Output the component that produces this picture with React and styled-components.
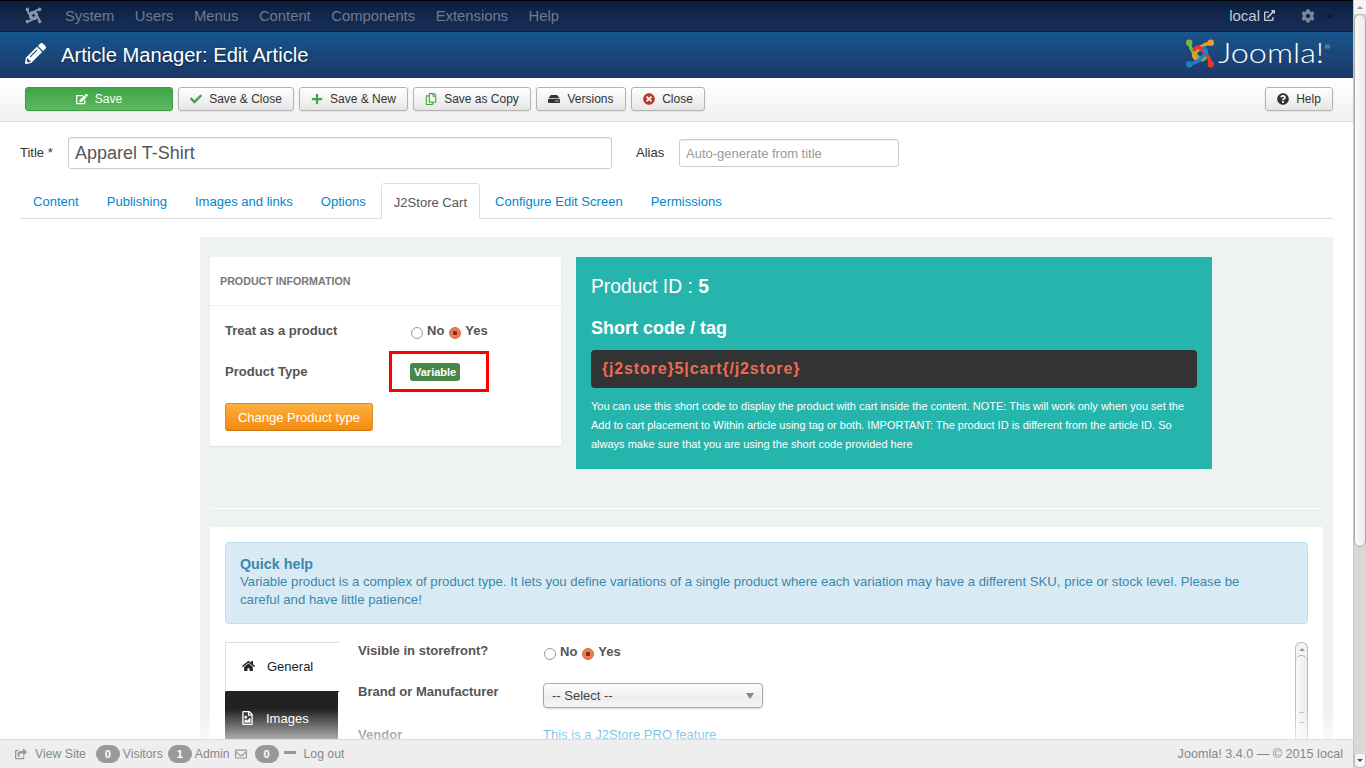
import React from "react";
import styled, { createGlobalStyle } from "styled-components";
import {
  FaPencilAlt, FaCheck, FaPlus, FaRegCopy, FaTimesCircle, FaQuestionCircle,
  FaCog, FaHome, FaRegFileImage, FaShareSquare, FaRegEnvelope, FaExternalLinkAlt, FaEdit, FaHdd,
} from "react-icons/fa";

const Global = createGlobalStyle`
  html, body { margin: 0; padding: 0; height: 100%; overflow: hidden; }
  body { font-family: "Liberation Sans", Arial, sans-serif; color: #333; background: #fff; }
  * { box-sizing: border-box; }
`;

const Shell = styled.div`display: flex; height: 768px; width: 1366px; overflow: hidden; position: relative;`;
const Main = styled.div`width: 1353px; flex: none; display: flex; flex-direction: column; height: 768px; overflow: hidden;`;

const PageScroll = styled.div`
  width: 13px; flex: none; height: 768px; background: #d9d8d4; display: flex; flex-direction: column;
  border-left: 1px solid #c8c7c3;
`;
const ScrollCap = styled.div`
  height: 14px; flex: none; background: #f6f5f3; display: flex; align-items: center; justify-content: center;
  ${(p) => p.$down && "border-radius: 0 0 5px 5px; border: 1px solid #bbb; border-top: none;"}
  &::before {
    content: ""; border-left: 3px solid transparent; border-right: 3px solid transparent;
    ${(p) => (p.$down ? "border-top: 3px solid #555;" : "border-bottom: 3px solid #999;")}
  }
`;
const PageThumb = styled.div`
  height: 533px; flex: none; border: 1px solid #aaa; border-radius: 6px;
  background: linear-gradient(to right, #fbfaf9, #ecebe9);
`;
const ScrollRest = styled.div`flex: 1;`;

const Nav = styled.div`
  height: 32px; flex: none; display: flex; align-items: center; padding: 0 0 1px 25px;
  background: linear-gradient(to bottom, #0d1f40, #172f57); border-top: 1px solid #000; border-bottom: 1px solid #0c1c38;
`;
const NavMark = styled.span`display: flex; width: 17px; height: 17px; margin-right: 23px; flex: none; svg { width: 100%; height: 100%; }`;
const NavItem = styled.span`font-size: 14.8px; color: #6e7c90; margin-right: 20.5px;`;
const NavRight = styled.div`margin-left: auto; display: flex; align-items: center; font-size: 15px;`;
const NavLocal = styled.span`display: flex; align-items: center; gap: 4px; margin-right: 26px; color: #c2cad6; svg { font-size: 11px; }`;
const NavGear = styled.span`display: flex; align-items: center; color: #7a8698; font-size: 14px; margin-right: 20px;
  &::after { content: ""; margin-left: 10px; margin-top: 2px; border-left: 4px solid transparent; border-right: 4px solid transparent; border-top: 4px solid #0b1a34; }
`;

const Header = styled.div`
  height: 46px; flex: none; display: flex; align-items: center; padding: 0 0 0 25px;
  background: linear-gradient(to bottom, #17568c, #1a3867);
`;
const HeaderIcon = styled.span`color: #fff; font-size: 21px; display: flex; margin-right: 15px; margin-top: -3px;`;
const HeaderTitle = styled.h1`margin: 0; font-size: 20.15px; font-weight: 400; color: #fff; text-shadow: 0 1px 2px rgba(0,0,0,.5);`;
const Brand = styled.div`margin-left: auto; display: flex; align-items: center; gap: 3px; margin-top: -4px;`;
const BrandMark = styled.span`display: flex; width: 30px; height: 31px; flex: none; svg { width: 100%; height: 100%; }`;
const BrandText = styled.span`display: inline-block; width: 135px; transform: scaleX(1.2); transform-origin: left center; font-family: Lato, sans-serif; font-weight: 300; font-size: 27px; color: #fff; line-height: 30px;
  sup { font-size: 6px; vertical-align: 14px; line-height: 0; }
`;

const Toolbar = styled.div`
  height: 44px; flex: none; display: flex; align-items: center; gap: 5px; padding: 0 20px 2px 25px;
  background: linear-gradient(to bottom, #fff, #f1f1f1); border-bottom: 1px solid #d8d8d8;
`;
const Btn = styled.div`
  height: 24px; display: flex; align-items: center; justify-content: center; gap: 7px;
  width: ${(p) => p.$w}px; flex: none; font-size: 12px; color: #333; border-radius: 3px;
  background: linear-gradient(to bottom, #fff, #e6e6e6); border: 1px solid #b3b3b3;
  box-shadow: 0 1px 2px rgba(0,0,0,.08);
  svg { font-size: 12px; color: ${(p) => p.$ic || "#333"}; }
`;
const SaveBtn = styled(Btn)`
  color: #fff; border-color: #3f9a46; background: linear-gradient(to bottom, #3ea745, #5cb85f);
  svg { color: #fff; }
`;
const HelpBtn = styled(Btn)`margin-left: auto;`;

const Content = styled.div`flex: 1; padding: 15px 20px 0; min-height: 0; overflow: hidden;`;
const TitleRow = styled.div`display: flex; align-items: center; height: 32px;`;
const TitleLabel = styled.label`font-size: 13px; width: 48px; flex: none; color: #333; padding-bottom: 2px;`;
const TitleInput = styled.div`
  width: 544px; height: 32px; flex: none; border: 1px solid #ccc; border-radius: 3px; padding: 0 6px;
  font-size: 18px; color: #555; display: flex; align-items: center; box-shadow: inset 0 1px 1px rgba(0,0,0,.07);
`;
const AliasLabel = styled.label`font-size: 13px; margin-left: 24px; width: 43px; flex: none; color: #333; padding-bottom: 2px;`;
const AliasInput = styled.div`
  width: 220px; height: 28px; flex: none; border: 1px solid #ccc; border-radius: 3px; padding: 0 6px;
  font-size: 13px; color: #999; display: flex; align-items: center; box-shadow: inset 0 1px 1px rgba(0,0,0,.07);
`;

const Tabs = styled.div`display: flex; margin-top: 14px; height: 36px; border-bottom: 1px solid #ddd;`;
const Tab = styled.div`
  height: ${(p) => (p.$active ? 36 : 35)}px; padding: 2px 13px 0; margin-right: 2px; display: flex; align-items: center; font-size: 13.05px;
  color: ${(p) => (p.$active ? "#555" : "#0088cc")};
  ${(p) => p.$active && "background: #fff; border: 1px solid #ddd; border-bottom-color: #fff; border-radius: 4px 4px 0 0; padding: 2px 12px 0;"}
`;

const Panel = styled.div`margin: 18px 0 0 180px; background: #eef2f3; padding: 20px 10px 0; height: 600px;`;
const TopRow = styled.div`display: flex; align-items: flex-start; gap: 15px;`;
const InfoCard = styled.div`width: 351px; height: 189px; flex: none; background: #fff; box-shadow: 0 1px 1px rgba(0,0,0,.05);`;
const InfoHead = styled.div`height: 49px; border-bottom: 1px solid #eef0f1; padding: 0 10px; display: flex; align-items: center;
  font-size: 10.7px; font-weight: 700; color: #777;`;
const InfoBody = styled.div`padding: 17px 15px 0;`;
const FieldRow = styled.div`display: flex; align-items: flex-start; height: ${(p) => p.$h}px;`;
const FieldLabel = styled.div`width: ${(p) => p.$w}px; flex: none; font-size: 13.05px; font-weight: 700; color: #555;`;
const Radios = styled.div`display: flex; align-items: center; gap: 4px; font-size: 13px; font-weight: 700; color: #555; margin-top: ${(p) => p.$mt || 0}px;`;
const RadioDot = styled.span`
  width: 12px; height: 12px; border-radius: 50%; flex: none; margin-top: 5px; margin-left: ${(p) => (p.$on ? 1 : 0)}px;
  border: 1px solid ${(p) => (p.$on ? "#d9663f" : "#999")};
  background: ${(p) => (p.$on ? "radial-gradient(circle, #7a3018 0 2px, #ec7a52 2.5px)" : "#fff")};
`;
const HighlightBox = styled.div`
  width: 100px; height: 41px; flex: none; border: 3px solid #f00; margin-left: -22px; margin-top: -13px;
  display: flex; align-items: center; padding-left: 18px;
`;
const Badge = styled.span`
  background: #47874a; color: #fff; font-size: 11px; font-weight: 700; padding: 2px 4px; border-radius: 3px; line-height: 14px;
`;
const OrangeBtn = styled.div`
  width: 148px; height: 28px; margin-top: -2px; display: flex; align-items: center; justify-content: center; font-size: 13px; color: #fff;
  background: linear-gradient(to bottom, #fbb040, #f58a0c); border: 1px solid #e58a1e; border-bottom: 1px solid #c97b10; border-radius: 3px;
`;

const Teal = styled.div`width: 636px; height: 212px; flex: none; background: #26b5ad; color: #fff; padding: 16px 15px 15px;`;
const ProductId = styled.div`font-size: 19.3px; line-height: 28px; b { font-weight: 700; }`;
const ShortCode = styled.div`font-size: 18px; font-weight: 700; line-height: 24px; margin-top: 15px;`;
const CodeBox = styled.div`height: 38px; margin-top: 10px; background: #333; border-radius: 4px; display: flex; align-items: center; padding: 0 11px;
  font-size: 16px; font-weight: 700; color: #e86d55; letter-spacing: .85px;`;
const TealText = styled.p`margin: 9px 0 0; font-size: 11px; line-height: 19px; color: #fff;`;

const Divider = styled.div`height: 1px; background: #fff; margin-top: 39px; margin-bottom: 18px;`;

const Card = styled.div`background: #fff; padding: 15px; height: 300px;`;
const Notice = styled.div`
  height: 82px; background: #d8ebf4; border: 1px solid #bcdfee; border-radius: 4px; padding: 13px 35px 13px 14px; color: #3a87ad; font-size: 13.2px; line-height: 18px;
  strong { display: block; font-size: 14.3px; line-height: 17px; }
`;
const Lower = styled.div`display: flex; margin-top: 18px; position: relative;`;
const SideTabs = styled.div`width: 114px; flex: none;`;
const SideTab = styled.div`
  height: ${(p) => (p.$active ? 50 : 60)}px; display: flex; align-items: center; gap: 12px; font-size: 13px; padding-left: 16px; padding-bottom: ${(p) => (p.$active ? 2 : 8)}px;
  ${(p) => p.$active
    ? "background: #fff; color: #222; border: 1px solid #ddd; border-right: none; border-bottom: 1px solid #222;"
    : "background: #222; color: #fff; margin-right: 1px;"}
  svg { font-size: 14px; width: 13px; }
`;
const FormCol = styled.div`flex: 1; padding: 1px 0 0 19px;`;
const FormRow = styled.div`display: flex; align-items: flex-start; height: ${(p) => p.$h}px;`;
const SelectBox = styled.div`
  width: 220px; height: 25px; margin-top: -1px; border: 1px solid #aaa; border-radius: 4px; display: flex; align-items: center; padding: 0 8px; font-size: 13px; color: #444;
  background: linear-gradient(to bottom, #fff, #eee 60%, #f6f6f6); box-shadow: 0 1px 2px rgba(0,0,0,.15);
  position: relative;
  &::after { content: ""; position: absolute; right: 8px; top: 9px; border-left: 4px solid transparent; border-right: 4px solid transparent; border-top: 6px solid #888; }
`;
const ProLink = styled.span`font-size: 13.05px; color: #0088cc;`;
const InnerScroll = styled.div`
  position: absolute; right: 0; top: 0; width: 13px; height: 110px; display: flex; flex-direction: column; border: 1px solid #bbb; border-bottom: none; border-radius: 6px 6px 0 0; background: #f4f3f1;
`;
const InnerCap = styled.div`height: 12px; flex: none; display: flex; align-items: center; justify-content: center;
  &::before { content: ""; border-left: 3px solid transparent; border-right: 3px solid transparent; border-bottom: 3px solid #999; }`;
const InnerThumb = styled.div`flex: 1; border-top: 1px solid #aaa; border-radius: 6px 6px 0 0; background: linear-gradient(to right, #fbfaf9, #ecebe9); display: flex; justify-content: center; padding-top: 56px;
  &::before { content: ""; width: 5px; height: 9px; border-top: 1px solid #bbb; border-bottom: 1px solid #bbb; }`;

const Fade = styled.div`
  position: absolute; left: 0; width: 1353px; bottom: 29px; height: 30px; pointer-events: none;
  background: linear-gradient(to bottom, rgba(255,255,255,0), rgba(255,255,255,.62));
`;
const Footer = styled.div`
  position: absolute; left: 0; bottom: 0; width: 1353px; height: 29px; background: #eee; border-top: 1px solid #ddd;
  display: flex; align-items: center; padding: 0 10px 0 15px; font-size: 12.25px; color: #888;
`;
const FootItem = styled.span`display: flex; align-items: center; margin-right: ${(p) => p.$mr || 0}px; svg { color: #999; font-size: 12px; }`;
const FootBadge = styled.span`
  background: #999; color: #fff; font-size: 11px; font-weight: 700; height: 18px; min-width: 24px; border-radius: 9px; display: inline-flex; align-items: center; justify-content: center;
  margin-right: ${(p) => p.$mr ?? 3}px;
`;
const FootDash = styled.span`width: 12px; height: 3px; background: #999; margin: -3px 8px 0 5px;`;
const FootRight = styled.span`margin-left: auto; font-size: 12.6px;`;

const JoomlaMark = ({ mono }) => {
  const colors = mono ? ["#8995a8", "#8995a8", "#8995a8", "#8995a8"] : ["#7ab83a", "#f39a2b", "#e8352e", "#1f7fc1"];
  return (
    <svg viewBox="0 0 32 32">
      {colors.map((c, i) => (
        <g key={i} transform={`rotate(${i * 90} 16 16)`} fill="none" stroke={c} strokeWidth="3.8" strokeLinecap="round" strokeLinejoin="round">
          <path d="M4.5 5 Q6 11 9 15 L16 22 Q18 23.5 20 22 L22 20" />
          <circle cx="4.5" cy="4.5" r="3.4" fill={c} stroke="none" />
        </g>
      ))}
    </svg>
  );
};

export default function App() {
  return (
    <Shell>
      <Global />
      <Main>
        <Nav>
          <NavMark><JoomlaMark mono /></NavMark>
          {["System", "Users", "Menus", "Content", "Components", "Extensions", "Help"].map((t) => (
            <NavItem key={t}>{t}</NavItem>
          ))}
          <NavRight>
            <NavLocal>local <FaExternalLinkAlt /></NavLocal>
            <NavGear><FaCog /></NavGear>
          </NavRight>
        </Nav>
        <Header>
          <HeaderIcon><FaPencilAlt /></HeaderIcon>
          <HeaderTitle>Article Manager: Edit Article</HeaderTitle>
          <Brand>
            <BrandMark><JoomlaMark /></BrandMark>
            <BrandText>Joomla!<sup>®</sup></BrandText>
          </Brand>
        </Header>
        <Toolbar>
          <SaveBtn $w={148}><FaEdit />Save</SaveBtn>
          <Btn $w={116} $ic="#46a546"><FaCheck />Save &amp; Close</Btn>
          <Btn $w={109} $ic="#46a546"><FaPlus />Save &amp; New</Btn>
          <Btn $w={118} $ic="#46a546"><FaRegCopy />Save as Copy</Btn>
          <Btn $w={90}><FaHdd />Versions</Btn>
          <Btn $w={74} $ic="#bd362f"><FaTimesCircle />Close</Btn>
          <HelpBtn $w={68}><FaQuestionCircle />Help</HelpBtn>
        </Toolbar>
        <Content>
          <TitleRow>
            <TitleLabel>Title *</TitleLabel>
            <TitleInput>Apparel T-Shirt</TitleInput>
            <AliasLabel>Alias</AliasLabel>
            <AliasInput>Auto-generate from title</AliasInput>
          </TitleRow>
          <Tabs>
            {["Content", "Publishing", "Images and links", "Options", "J2Store Cart", "Configure Edit Screen", "Permissions"].map((t) => (
              <Tab key={t} $active={t === "J2Store Cart"}>{t}</Tab>
            ))}
          </Tabs>
          <Panel>
            <TopRow>
              <InfoCard>
                <InfoHead>PRODUCT INFORMATION</InfoHead>
                <InfoBody>
                  <FieldRow $h={41}>
                    <FieldLabel $w={186}>Treat as a product</FieldLabel>
                    <Radios $mt={-1}><RadioDot />No<RadioDot $on />Yes</Radios>
                  </FieldRow>
                  <FieldRow $h={41}>
                    <FieldLabel $w={186}>Product Type</FieldLabel>
                    <HighlightBox><Badge>Variable</Badge></HighlightBox>
                  </FieldRow>
                  <OrangeBtn>Change Product type</OrangeBtn>
                </InfoBody>
              </InfoCard>
              <Teal>
                <ProductId>Product ID : <b>5</b></ProductId>
                <ShortCode>Short code / tag</ShortCode>
                <CodeBox>{"{j2store}5|cart{/j2store}"}</CodeBox>
                <TealText>You can use this short code to display the product with cart inside the content. NOTE: This will work only when you set the Add to cart placement to Within article using tag or both. IMPORTANT: The product ID is different from the article ID. So always make sure that you are using the short code provided here</TealText>
              </Teal>
            </TopRow>
            <Divider />
            <Card>
              <Notice>
                <strong>Quick help</strong>
                Variable product is a complex of product type. It lets you define variations of a single product where each variation may have a different SKU, price or stock level. Please be careful and have little patience!
              </Notice>
              <Lower>
                <SideTabs>
                  <SideTab $active><FaHome />General</SideTab>
                  <SideTab><FaRegFileImage />Images</SideTab>
                </SideTabs>
                <FormCol>
                  <FormRow $h={41}>
                    <FieldLabel $w={186}>Visible in storefront?</FieldLabel>
                    <Radios><RadioDot />No<RadioDot $on />Yes</Radios>
                  </FormRow>
                  <FormRow $h={43}>
                    <FieldLabel $w={185}>Brand or Manufacturer</FieldLabel>
                    <SelectBox>-- Select --</SelectBox>
                  </FormRow>
                  <FormRow $h={30}>
                    <FieldLabel $w={185}>Vendor</FieldLabel>
                    <ProLink>This is a J2Store PRO feature</ProLink>
                  </FormRow>
                </FormCol>
                <InnerScroll><InnerCap /><InnerThumb /></InnerScroll>
              </Lower>
            </Card>
          </Panel>
        </Content>
      </Main>
      <PageScroll>
        <ScrollCap />
        <PageThumb />
        <ScrollRest />
        <ScrollCap $down />
      </PageScroll>
      <Fade />
      <Footer>
        <FootItem $mr={8}><FaShareSquare /></FootItem>
        <FootItem $mr={10}>View Site</FootItem>
        <FootBadge>0</FootBadge>
        <FootItem $mr={5}>Visitors</FootItem>
        <FootBadge>1</FootBadge>
        <FootItem $mr={5}>Admin</FootItem>
        <FootItem $mr={8}><FaRegEnvelope /></FootItem>
        <FootBadge $mr={0}>0</FootBadge>
        <FootDash />
        <FootItem>Log out</FootItem>
        <FootRight>Joomla! 3.4.0 — © 2015 local</FootRight>
      </Footer>
    </Shell>
  );
}
